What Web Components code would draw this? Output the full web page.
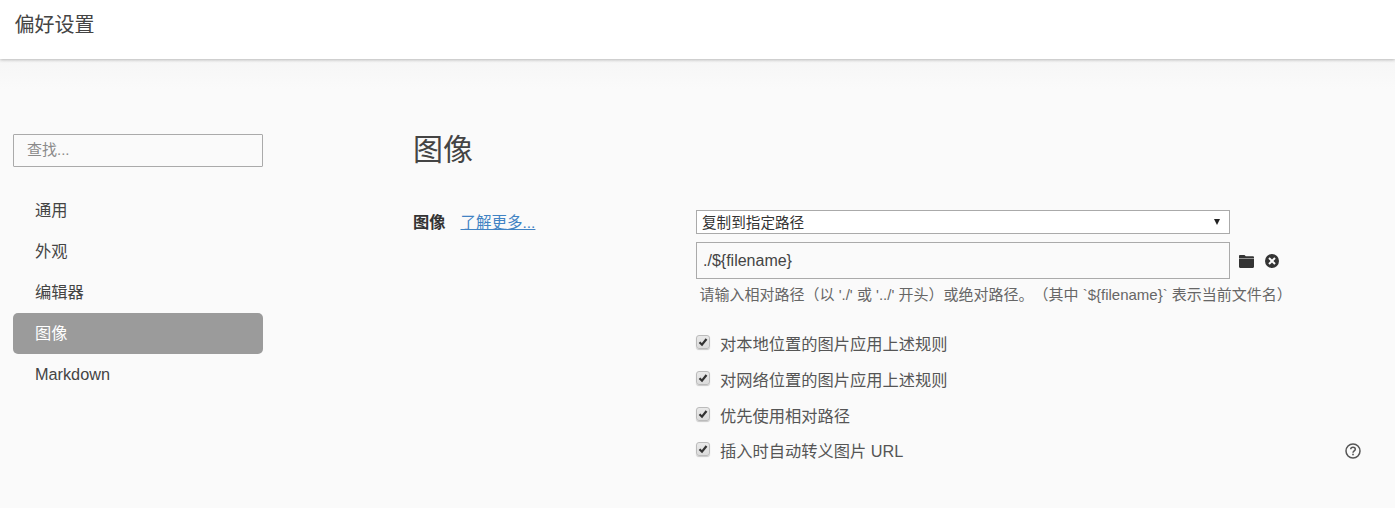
<!DOCTYPE html>
<html lang="zh">
<head>
<meta charset="utf-8">
<title>偏好设置</title>
<style>
html,body{
    margin:0;
    height:100%;
    overflow:hidden;
    background:#fafafa;
    color:#333;
    font-family:"Liberation Sans","Noto Sans CJK SC",sans-serif;
    font-size:16px;
}
</style>
</head>
<body>
<pref-window heading="偏好设置">
    <pref-sidebar slot="side">
        <pref-nav-item>通用</pref-nav-item>
        <pref-nav-item>外观</pref-nav-item>
        <pref-nav-item>编辑器</pref-nav-item>
        <pref-nav-item active>图像</pref-nav-item>
        <pref-nav-item>Markdown</pref-nav-item>
    </pref-sidebar>
    <pref-image-panel slot="main">
        <pref-check>对本地位置的图片应用上述规则</pref-check>
        <pref-check>对网络位置的图片应用上述规则</pref-check>
        <pref-check>优先使用相对路径</pref-check>
        <pref-check help>插入时自动转义图片 URL</pref-check>
    </pref-image-panel>
</pref-window>

<script>
class PrefWindow extends HTMLElement {
    constructor(){
        super();
        this.attachShadow({mode:'open'});
        this.shadowRoot.innerHTML = `<style>
:host{
    display:flex;
    flex-direction:column;
    height:100vh;
}
header{
    height:59px;
    flex:none;
    box-sizing:border-box;
    padding:12px 14.500px 0;
    font-size:20px;
    line-height:27px;
    color:#444;
    background:#fff;
    box-shadow:0 1px 3px rgba(0,0,0,0.25);
    position:relative;
}
#body{
    flex:1;
    display:flex;
    background:linear-gradient(#f6f6f6,#fafafa 30px);
}
</style>
<header id="title"></header>
<div id="body">
    <slot name="side"></slot>
    <slot name="main"></slot>
</div>`;
    }
    connectedCallback(){
        this.shadowRoot.getElementById("title").textContent = this.getAttribute("heading") || "";
    }
}

class PrefSidebar extends HTMLElement {
    constructor(){
        super();
        this.attachShadow({mode:'open'});
        this.shadowRoot.innerHTML = `<style>
:host{
    display:block;
    flex:none;
    width:250px;
    margin-left:13px;
    padding-top:75px;
}
#search{
    display:block;
    width:100%;
    height:33px;
    box-sizing:border-box;
    margin:0 0 23px;
    padding:0 13px 2px;
    border:1px solid #aaa;
    border-radius:1px;
    background:transparent;
    font:inherit;
    font-size:15px;
    color:#333;
    outline:none;
}
#search::placeholder{
    color:#8a8a8a;
    opacity:1;
}
</style>
<input id="search" type="text" placeholder="查找...">
<slot></slot>`;
    }
}

class PrefNavItem extends HTMLElement {
    constructor(){
        super();
        this.attachShadow({mode:'open'});
        this.shadowRoot.innerHTML = `<style>
:host{
    display:block;
    height:41px;
    padding-left:22px;
    line-height:41px;
    font-size:16.250px;
    color:#444;
    border-radius:5px;
}
:host([active]){
    background:#9b9b9b;
    color:#fff;
}
</style>
<slot></slot>`;
    }
}

class PrefImagePanel extends HTMLElement {
    constructor(){
        super();
        this.attachShadow({mode:'open'});
        this.shadowRoot.innerHTML = `<style>
:host{
    display:block;
    flex:1;
    padding:69px 0 0 150px;
}
h1{
    margin:0 0 38px;
    font-size:30px;
    line-height:44px;
    font-weight:400;
    color:#444;
}
#row{
    display:flex;
}
#label{
    width:283px;
    flex:none;
    display:flex;
    gap:15px;
    align-items:baseline;
    line-height:25px;
    font-size:16.250px;
}
b{
    color:#333;
    font-weight:700;
}
a{
    color:#4183c4;
    font-size:15.500px;
    text-decoration:underline;
}
#control{
    flex:1;
    min-width:0;
}
#select{
    width:534px;
    height:24px;
    box-sizing:border-box;
    border:1px solid #aaa;
    background:#fff;
    display:flex;
    align-items:center;
    justify-content:space-between;
    padding:0 9px 2px 5px;
    font-size:14.600px;
    color:#333;
}
#arrow{
    width:0;
    height:0;
    margin-top:2px;
    border-left:3.500px solid transparent;
    border-right:3.500px solid transparent;
    border-top:6px solid #222;
}
#path{
    display:flex;
    align-items:center;
    margin-top:8px;
}
#input{
    width:534px;
    height:37px;
    box-sizing:border-box;
    border:1px solid #aaa;
    padding:0 6px;
    line-height:35px;
    font-size:16px;
    color:#444;
}
#path svg{
    display:block;
    fill:#333;
}
#folder{
    width:17px;
    height:16px;
    margin-left:8px;
}
#clear{
    width:16px;
    height:16px;
    margin:1px 0 0 9px;
}
#note{
    margin:6px 0 20.500px 3.500px;
    font-size:15px;
    line-height:20px;
    color:#666;
    white-space:nowrap;
    text-spacing-trim:space-all;
}
</style>
<h1>图像</h1>
<div id="row">
    <div id="label"><b>图像</b><a href="#">了解更多...</a></div>
    <div id="control">
        <div id="select"><span>复制到指定路径</span><span id="arrow"></span></div>
        <div id="path">
            <div id="input">./\${filename}</div>
            <svg id="folder" viewBox="0 0 17 16"><path d="M1 3.200C1 2.500 1.400 2 2 2H6.500L7.800 3.300H14.800C15.500 3.300 16 3.800 16 4.400V4.900H1z"/><path d="M1 5.600H16V13.800C16 14.500 15.500 15 14.800 15H2.200C1.500 15 1 14.500 1 13.800z"/></svg>
            <svg id="clear" viewBox="0 0 16 16"><path fill-rule="evenodd" d="M8 1a7 7 0 1 1 0 14A7 7 0 0 1 8 1zM5.700 4.300 4.300 5.700 6.600 8l-2.300 2.300 1.400 1.400L8 9.400l2.300 2.300 1.400-1.400L9.400 8l2.300-2.300-1.400-1.400L8 6.600z"/></svg>
        </div>
        <div id="note">请输入相对路径（以 './' 或 '../' 开头）或绝对路径。（其中 \`\${filename}\` 表示当前文件名）</div>
        <slot></slot>
    </div>
</div>`;
    }
}

class PrefCheck extends HTMLElement {
    constructor(){
        super();
        this.attachShadow({mode:'open'});
        this.shadowRoot.innerHTML = `<style>
:host{
    display:flex;
    align-items:center;
    height:35.700px;
    font-size:16.250px;
    color:#555;
    position:relative;
}
#box{
    width:14px;
    height:14px;
    box-sizing:border-box;
    margin:-2px 10px 0 0;
    flex:none;
    border:1px solid #bbb;
    border-radius:3px;
    background:linear-gradient(#e9e9e9,#dcdcdc);
    box-shadow:0 1px 1px rgba(0,0,0,0.2);
    display:flex;
}
#box svg{
    width:12px;
    height:12px;
}
#help{
    display:none;
    position:absolute;
    left:648px;
    top:9px;
    width:18px;
    height:18px;
}
:host([help]) #help{
    display:block;
}
</style>
<span id="box"><svg viewBox="0 0 12 12"><path d="M2.500 6.200 5 8.700 9.500 3" fill="none" stroke="#333" stroke-width="2.200"/></svg></span>
<slot></slot>
<svg id="help" viewBox="0 0 18 18"><circle cx="9" cy="9" r="7" fill="none" stroke="#555" stroke-width="1.500"/><path d="M6.700 7.200C6.800 5.900 7.800 5.200 9 5.200c1.300 0 2.300.8 2.300 2 0 1.700-2.300 1.700-2.300 3.500" fill="none" stroke="#555" stroke-width="1.500"/><rect x="8.200" y="11.700" width="1.600" height="1.600" fill="#555"/></svg>`;
    }
}

customElements.define('pref-window',PrefWindow);
customElements.define('pref-sidebar',PrefSidebar);
customElements.define('pref-nav-item',PrefNavItem);
customElements.define('pref-image-panel',PrefImagePanel);
customElements.define('pref-check',PrefCheck);
</script>
</body>
</html>
